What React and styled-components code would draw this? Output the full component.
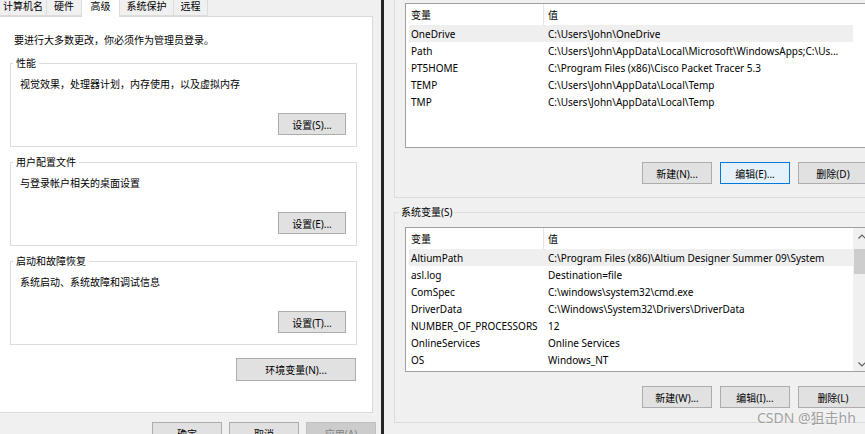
import React from 'react'
import styled, { createGlobalStyle } from 'styled-components'

const GlobalStyle = createGlobalStyle`
  html, body {
    margin: 0;
    padding: 0;
  }
  body {
    font-family: "Noto Sans", "Noto Sans CJK SC", sans-serif;
    font-size: 10px;
    color: #000;
    background: #f0f0f0;
  }
`

const tabs = [
  { label: '计算机名', width: 48 },
  { label: '硬件', width: 36 },
  { label: '高级', width: 39, active: true },
  { label: '系统保护', width: 55 },
  { label: '远程', width: 35 },
]

const groups = [
  { title: '性能', text: '视觉效果，处理器计划，内存使用，以及虚拟内存', button: '设置(S)...' },
  { title: '用户配置文件', text: '与登录帐户相关的桌面设置', button: '设置(E)...' },
  { title: '启动和故障恢复', text: '系统启动、系统故障和调试信息', button: '设置(T)...' },
]

const userVars = [
  ['OneDrive', 'C:\\Users\\John\\OneDrive'],
  ['Path', 'C:\\Users\\John\\AppData\\Local\\Microsoft\\WindowsApps;C:\\Us...'],
  ['PT5HOME', 'C:\\Program Files (x86)\\Cisco Packet Tracer 5.3'],
  ['TEMP', 'C:\\Users\\John\\AppData\\Local\\Temp'],
  ['TMP', 'C:\\Users\\John\\AppData\\Local\\Temp'],
]

const sysVars = [
  ['AltiumPath', 'C:\\Program Files (x86)\\Altium Designer Summer 09\\System'],
  ['asl.log', 'Destination=file'],
  ['ComSpec', 'C:\\windows\\system32\\cmd.exe'],
  ['DriverData', 'C:\\Windows\\System32\\Drivers\\DriverData'],
  ['NUMBER_OF_PROCESSORS', '12'],
  ['OnlineServices', 'Online Services'],
  ['OS', 'Windows_NT'],
]

const VarList = ({ rows, scroll }) => (
  <ListBox>
    <Table>
      <Row header>
        <NameCell>变量</NameCell>
        <ValueCell header>值</ValueCell>
      </Row>
      {rows.map(([name, value], i) => (
        <Row key={name} hot={i === 0}>
          <NameCell>{name}</NameCell>
          <ValueCell>{value}</ValueCell>
        </Row>
      ))}
    </Table>
    {scroll && (
      <ScrollBar>
        <Chevron viewBox="0 0 8 5">
          <polyline points="0.5,4.5 4,1 7.5,4.5" />
        </Chevron>
        <Thumb />
        <Grow />
        <Chevron viewBox="0 0 8 5">
          <polyline points="0.5,0.5 4,4 7.5,0.5" />
        </Chevron>
      </ScrollBar>
    )}
  </ListBox>
)

const App = () => {
  return (
    <>
      <GlobalStyle />
      <Screen>
        <LeftWindow>
          <TabStrip>
            {tabs.map((t) => (
              <Tab key={t.label} width={t.width} active={t.active}>
                {t.label}
              </Tab>
            ))}
          </TabStrip>
          <Panel>
            <Notice>要进行大多数更改，你必须作为管理员登录。</Notice>
            {groups.map((g) => (
              <Group key={g.title}>
                <Caption>{g.title}</Caption>
                <GroupText>{g.text}</GroupText>
                <GroupActions>
                  <Button width={68}>{g.button}</Button>
                </GroupActions>
              </Group>
            ))}
            <EnvRow>
              <Button width={120} height={23}>环境变量(N)...</Button>
            </EnvRow>
          </Panel>
          <DialogButtons>
            <Button width={70} height={23}>确定</Button>
            <Button width={70} height={23}>取消</Button>
            <Button width={70} height={23} disabled>应用(A)</Button>
          </DialogButtons>
        </LeftWindow>

        <Divider />

        <RightWindow>
          <UserGroup>
            <VarList rows={userVars} />
            <ButtonRow>
              <Button width={70}>新建(N)...</Button>
              <Button width={70} focused>编辑(E)...</Button>
              <Button width={70}>删除(D)</Button>
            </ButtonRow>
          </UserGroup>
          <SysGroup>
            <SysCaption>系统变量(S)</SysCaption>
            <VarList rows={sysVars} scroll />
            <ButtonRow>
              <Button width={70}>新建(W)...</Button>
              <Button width={70}>编辑(I)...</Button>
              <Button width={70}>删除(L)</Button>
            </ButtonRow>
          </SysGroup>
        </RightWindow>

        <Watermark>CSDN @狙击hh</Watermark>
      </Screen>
    </>
  )
}

export default App

const Screen = styled.div`
  position: relative;
  display: flex;
  width: 865px;
  height: 434px;
  overflow: hidden;
  background: #f0f0f0;
`

const LeftWindow = styled.div`
  flex: 0 0 381px;
  display: flex;
  flex-direction: column;
  background: #f0f0f0;
`

const TabStrip = styled.div`
  flex-shrink: 0;
  display: flex;
  align-items: flex-end;
  height: 16px;
  margin-left: -1px;
`

const Tab = styled.div`
  position: relative;
  flex: 0 0 ${(p) => p.width}px;
  height: ${(p) => (p.active ? 20 : 18)}px;
  margin-bottom: ${(p) => (p.active ? -1 : 0)}px;
  box-sizing: border-box;
  display: flex;
  align-items: ${(p) => (p.active ? 'flex-start' : 'flex-end')};
  justify-content: center;
  padding: ${(p) => (p.active ? '0' : '0 0 1px')};
  line-height: 16px;
  background: ${(p) => (p.active ? '#fff' : '#f0f0f0')};
  border: 1px solid #dcdcdc;
  border-bottom: ${(p) => (p.active ? 'none' : '1px solid #dcdcdc')};
  margin-right: -1px;
  z-index: ${(p) => (p.active ? 1 : 0)};
`

const Panel = styled.div`
  flex-shrink: 0;
  width: 374px;
  height: 397px;
  margin-left: -1px;
  box-sizing: border-box;
  padding-top: 15px;
  background: #fff;
  border: 1px solid #d9d9d9;
  display: flex;
  flex-direction: column;
`

const Notice = styled.div`
  line-height: 16px;
  margin: 0 0 7px 14px;
`

const Group = styled.fieldset`
  width: 347px;
  box-sizing: border-box;
  margin: 0 0 7px 10px;
  padding: 5px 10px 11px 9px;
  border: 1px solid #dcdcdc;
  min-inline-size: 0;
`

const Caption = styled.legend`
  padding: 0 3px;
  margin-left: -7px;
  line-height: 16px;
`

const GroupText = styled.div`
  line-height: 16px;
`

const GroupActions = styled.div`
  display: flex;
  justify-content: flex-end;
  margin-top: 21px;
`

const EnvRow = styled.div`
  display: flex;
  justify-content: flex-end;
  width: 347px;
  margin: 6px 0 0 10px;
  padding-right: 1px;
  box-sizing: border-box;
`

const Button = styled.button`
  flex-shrink: 0;
  width: ${(p) => p.width}px;
  height: ${(p) => p.height || 22}px;
  padding: 0;
  box-sizing: border-box;
  font-family: inherit;
  font-size: 10px;
  color: ${(p) => (p.disabled ? '#838383' : '#000')};
  background: ${(p) => (p.disabled ? '#cccccc' : p.focused ? '#e5f1fb' : '#e1e1e1')};
  border: 1px solid ${(p) => (p.disabled ? '#bfbfbf' : p.focused ? '#0078d7' : '#adadad')};
  border-radius: 0;
`

const DialogButtons = styled.div`
  flex-shrink: 0;
  display: flex;
  justify-content: flex-end;
  gap: 7px;
  margin-top: 9px;
  padding-right: 5px;
`

const Divider = styled.div`
  flex: 0 0 3px;
  background: #262626;
`

const RightWindow = styled.div`
  flex: 0 0 500px;
  display: flex;
  flex-direction: column;
  padding-left: 10px;
  box-sizing: border-box;
  background: #f0f0f0;
`

const UserGroup = styled.div`
  flex-shrink: 0;
  width: 487px;
  box-sizing: border-box;
  margin-top: -12px;
  padding: 14px 10px 13px;
  border: 1px solid #dcdcdc;
`

const SysGroup = styled.fieldset`
  flex-shrink: 0;
  width: 487px;
  box-sizing: border-box;
  margin: 6px 0 0;
  padding: 7px 10px 14px;
  border: 1px solid #dcdcdc;
  min-inline-size: 0;
`

const SysCaption = styled.legend`
  padding: 0 2px;
  margin-left: -6px;
  line-height: 16px;
`

const ListBox = styled.div`
  display: flex;
  width: 465px;
  height: 145px;
  box-sizing: border-box;
  background: #fff;
  border: 1px solid #a0a0a0;
`

const Table = styled.div`
  flex: 0 0 447px;
  display: flex;
  flex-direction: column;
  padding-left: 3px;
  box-sizing: border-box;
`

const Row = styled.div`
  display: flex;
  height: ${(p) => (p.header ? 21 : 17)}px;
  align-items: center;
  background: ${(p) => (p.hot ? '#efefef' : 'transparent')};
  white-space: nowrap;
`

const NameCell = styled.div`
  flex: 0 0 134px;
  padding-left: 2px;
  box-sizing: border-box;
  overflow: hidden;
`

const ValueCell = styled.div`
  flex: 1;
  align-self: stretch;
  display: flex;
  align-items: center;
  padding-left: ${(p) => (p.header ? 4 : 5)}px;
  border-left: ${(p) => (p.header ? '1px solid #e5e5e5' : 'none')};
  overflow: hidden;
`

const ScrollBar = styled.div`
  flex: 0 0 17px;
  display: flex;
  flex-direction: column;
  align-items: center;
  background: #f0f0f0;
  padding: 6px 0 4px;
  box-sizing: border-box;
`

const Chevron = styled.svg`
  width: 8px;
  height: 5px;
  fill: none;
  stroke: #606060;
  stroke-width: 1.2;
`

const Thumb = styled.div`
  width: 15px;
  height: 25px;
  margin-top: 10px;
  background: #cdcdcd;
`

const Grow = styled.div`
  flex: 1;
`

const ButtonRow = styled.div`
  display: flex;
  justify-content: flex-end;
  gap: 8px;
  margin-top: 14px;
  padding-right: 2px;
`

const Watermark = styled.div`
  position: absolute;
  left: 757px;
  top: 409px;
  font-size: 14px;
  line-height: 18px;
  color: #a0a0a0;
  text-shadow: 0 0 2px #fff;
  pointer-events: none;
`
